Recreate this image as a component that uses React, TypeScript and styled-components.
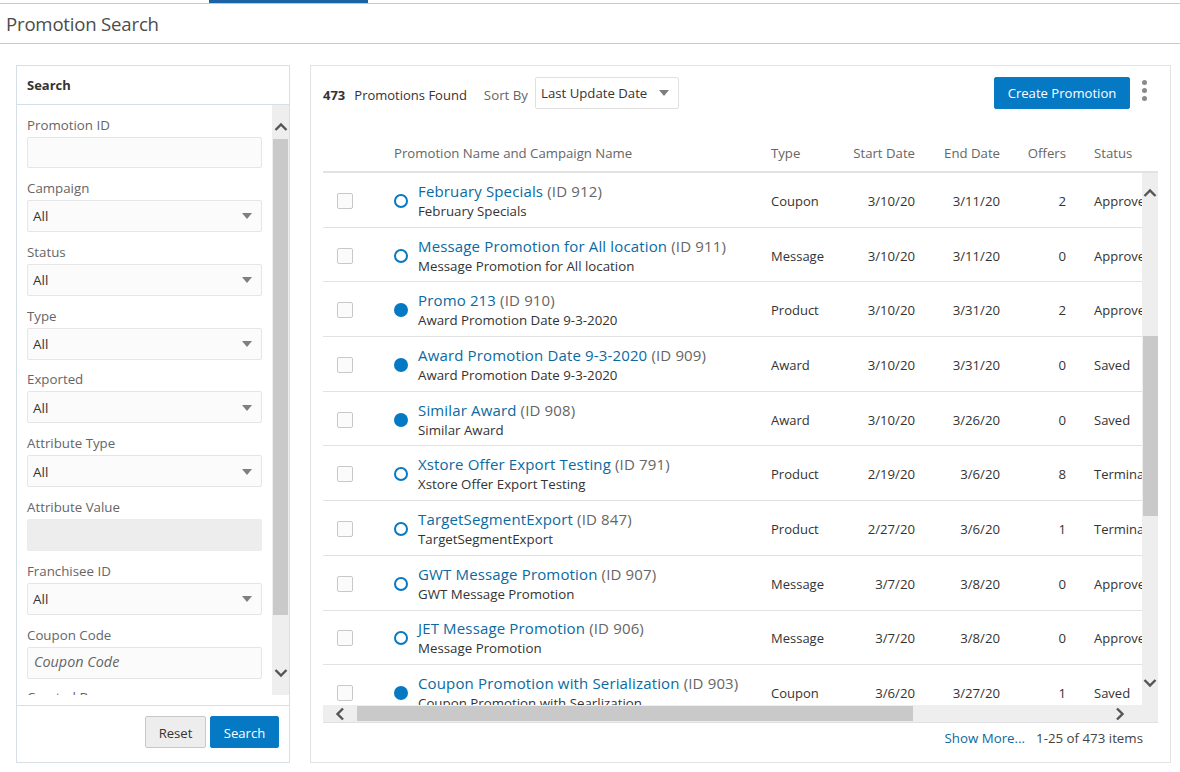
import React from "react";
import styled, { createGlobalStyle } from "styled-components";

const Global = createGlobalStyle`
  html, body { margin: 0; padding: 0; background: #fff; }
  body { font-family: "Open Sans", "Noto Sans", sans-serif; color: #333; font-size: 13px; }
  * { box-sizing: border-box; }
`;

const Page = styled.div`
  width: 1180px;
  height: 772px;
  overflow: hidden;
  display: flex;
  flex-direction: column;
`;
const TopStrip = styled.div`
  height: 4px;
  border-bottom: 1px solid #c8c8c8;
  padding-left: 209px;
`;
const ActiveTab = styled.div`
  width: 159px;
  height: 3px;
  background: #1b63a5;
`;
const TitleBar = styled.header`
  height: 40px;
  border-bottom: 1px solid #c8c8c8;
  padding-left: 6px;
  display: flex;
  align-items: center;
`;
const Title = styled.h1`
  margin: 0;
  font-size: 18.6px;
  font-weight: 400;
  color: #4c4c4c;
  letter-spacing: -0.2px;
`;
const Content = styled.main`
  display: flex;
  gap: 20px;
  padding: 21px 9px 0 16px;
`;
const SearchPanel = styled.aside`
  width: 274px;
  height: 698px;
  border: 1px solid #d6dfe8;
  display: flex;
  flex-direction: column;
`;
const PanelHead = styled.div`
  height: 39px;
  flex: none;
  border-bottom: 1px solid #d6dfe8;
  padding-left: 10px;
  display: flex;
  align-items: center;
  font-weight: 700;
  font-size: 13px;
  color: #333;
`;
const PanelBody = styled.div`
  height: 590px;
  flex: none;
  display: flex;
  overflow: hidden;
`;
const Form = styled.div`
  flex: 1;
  padding: 11px 10px 0;
  overflow: hidden;
`;
const Field = styled.div`
  margin-bottom: 10.85px;
  &:last-child {
    margin-top: -2px;
  }
`;
const Label = styled.div`
  font-size: 13.3px;
  line-height: 18px;
  height: 21px;
  color: #666;
`;
const Control = styled.div<{ $h?: number; $disabled?: boolean }>`
  height: ${(p) => p.$h ?? 32}px;
  border: 1px solid ${(p) => (p.$disabled ? "#ececec" : "#e6e6e6")};
  border-radius: 2px;
  background: ${(p) => (p.$disabled ? "#ededed" : "#fbfbfb")};
  display: flex;
  align-items: center;
  justify-content: space-between;
  padding: 1px 9px 0 5px;
  font-size: 13.5px;
  color: #333;
`;
const Placeholder = styled.span`
  font-style: italic;
  font-size: 14.4px;
  color: #666;
  padding: 0 0 3px 1px;
`;
const Caret = styled.span`
  width: 0;
  height: 0;
  border-left: 5px solid transparent;
  border-right: 5px solid transparent;
  border-top: 6px solid #7f7f7f;
`;
const VBar = styled.div<{ $w: number }>`
  width: ${(p) => p.$w}px;
  flex: none;
  background: #eeeeee;
  display: flex;
  flex-direction: column;
  align-items: center;
`;
const BarButton = styled.div<{ $h: number; $top?: number }>`
  height: ${(p) => p.$h}px;
  padding-top: ${(p) => p.$top ?? 0}px;
  flex: none;
  display: flex;
  align-items: center;
  justify-content: center;
  color: #555;
`;
const Thumb = styled.div<{ $h: number; $top?: number }>`
  width: 15px;
  height: ${(p) => p.$h}px;
  margin-top: ${(p) => p.$top ?? 0}px;
  background: #c9c9c9;
  flex: none;
`;
const Spacer = styled.div`
  flex: 1;
`;
const PanelFoot = styled.div`
  flex: 1;
  border-top: 1px solid #d6dfe8;
  margin-top: 10px;
  padding: 10px 10px 0;
  display: flex;
  justify-content: flex-end;
  align-items: flex-start;
  gap: 4px;
`;
const Button = styled.button<{ $primary?: boolean; $w: number; $drop?: number }>`
  width: ${(p) => p.$w}px;
  height: 32px;
  border: 1px solid ${(p) => (p.$primary ? "#0a7cc7" : "#c8c8c8")};
  border-radius: 2px;
  background: ${(p) => (p.$primary ? "#0679c5" : "#ededed")};
  color: ${(p) => (p.$primary ? "#fff" : "#333")};
  font: 400 13.1px "Open Sans", "Noto Sans", sans-serif;
  padding: ${(p) => p.$drop ?? 0}px 0 0;
`;
const ResultsPanel = styled.section`
  width: 861px;
  height: 698px;
  border: 1px solid #e2e2e2;
  padding: 11px 12px 0;
  display: flex;
  flex-direction: column;
`;
const Toolbar = styled.div`
  height: 32px;
  flex: none;
  display: flex;
  align-items: center;
`;
const Count = styled.b`
  font-size: 13px;
  font-weight: 700;
  margin-right: 9px;
  padding-top: 4px;
  color: #333;
`;
const Found = styled.span`
  font-size: 13px;
  color: #333;
  margin-right: 17px;
  padding-top: 4px;
`;
const SortLabel = styled.span`
  font-size: 13.3px;
  color: #666;
  margin-right: 7px;
  padding-top: 4px;
`;
const SortSelect = styled.div`
  width: 144px;
  height: 32px;
  border: 1px solid #e0e0e0;
  border-radius: 2px;
  display: flex;
  align-items: center;
  justify-content: space-between;
  padding: 0 9px 1px 5px;
  font-size: 13.2px;
  color: #333;
`;
const Dots = styled.div`
  width: 28px;
  padding-bottom: 5px;
  display: flex;
  flex-direction: column;
  align-items: center;
  gap: 3px;
`;
const Dot = styled.span`
  width: 5px;
  height: 5px;
  border-radius: 50%;
  background: #8a8a8a;
`;
const GRID = "71px 377px 82px 62px 85px 66px 1fr";
const HeadRow = styled.div`
  margin-top: 18px;
  height: 46px;
  flex: none;
  border-bottom: 2px solid #e2e2e2;
  display: grid;
  grid-template-columns: ${GRID};
  align-items: end;
  font-size: 13.2px;
  color: #666;
  padding-bottom: 9px;
`;
const HeadCell = styled.div<{ $right?: boolean }>`
  text-align: ${(p) => (p.$right ? "right" : "left")};
  white-space: nowrap;
`;
const Middle = styled.div`
  height: 532px;
  flex: none;
  display: flex;
`;
const RowsClip = styled.div`
  flex: 1;
  overflow: hidden;
`;
const Row = styled.div`
  height: 54.7px;
  padding-top: 2px;
  border-bottom: 1px solid #e2e2e2;
  display: grid;
  grid-template-columns: ${GRID};
  align-items: center;
  font-size: 13px;
  color: #333;
`;
const CheckCell = styled.div`
  display: flex;
  padding-left: 14px;
`;
const Check = styled.span`
  width: 16px;
  height: 16px;
  border: 1px solid #c8c8c8;
  border-radius: 2px;
  background: #fbfbfb;
`;
const NameCell = styled.div`
  display: flex;
  align-items: center;
  gap: 10px;
  min-width: 0;
`;
const Status = styled.span<{ $filled: boolean }>`
  width: 14px;
  height: 14px;
  flex: none;
  border-radius: 50%;
  border: 2px solid #0679c5;
  background: ${(p) => (p.$filled ? "#0679c5" : "#fff")};
`;
const NameText = styled.div`
  white-space: nowrap;
`;
const NameLine = styled.div`
  font-size: 15px;
  letter-spacing: 0.15px;
  color: #666;
  line-height: 20px;
`;
const Link = styled.span`
  color: #0a6aa1;
`;
const Sub = styled.div`
  font-size: 13.3px;
  line-height: 20px;
  color: #333;
`;
const Num = styled.div`
  text-align: right;
  font-size: 13.2px;
`;
const StatusText = styled.div`
  padding-left: 28px;
  white-space: nowrap;
  overflow: hidden;
`;
const HBar = styled.div`
  height: 18px;
  flex: none;
  background: #eeeeee;
  border-bottom: 1px solid #e0e0e0;
  display: flex;
  align-items: center;
`;
const HThumb = styled.div`
  width: 556px;
  height: 15px;
  background: #c9c9c9;
`;
const ArrowSlot = styled.div<{ $w: number }>`
  width: ${(p) => p.$w}px;
  flex: none;
  display: flex;
  align-items: center;
  justify-content: center;
  color: #555;
`;
const Pager = styled.div`
  height: 30px;
  display: flex;
  justify-content: flex-end;
  align-items: center;
  gap: 11px;
  padding-right: 15px;
  font-size: 13.3px;
  color: #444;
`;
const ChevronIcon = ({ d }: { d: string }) => (
  <svg width="14" height="14" viewBox="0 0 14 14" fill="none" stroke="currentColor" strokeWidth="2.4">
    <path d={d} />
  </svg>
);
const UP = "M1.5 10 L7 4.5 L12.5 10";
const DOWN = "M1.5 4 L7 9.5 L12.5 4";
const LEFT = "M10 1.5 L4.5 7 L10 12.5";
const RIGHT = "M4 1.5 L9.5 7 L4 12.5";

const fields = [
  { label: "Promotion ID", kind: "input" },
  { label: "Campaign", kind: "select" },
  { label: "Status", kind: "select" },
  { label: "Type", kind: "select" },
  { label: "Exported", kind: "select" },
  { label: "Attribute Type", kind: "select" },
  { label: "Attribute Value", kind: "disabled" },
  { label: "Franchisee ID", kind: "select" },
  { label: "Coupon Code", kind: "placeholder" },
  { label: "Created By", kind: "input" },
];

const rows = [
  ["February Specials", "912", "February Specials", "Coupon", "3/10/20", "3/11/20", "2", "Approved", false],
  ["Message Promotion for All location", "911", "Message Promotion for All location", "Message", "3/10/20", "3/11/20", "0", "Approved", false],
  ["Promo 213", "910", "Award Promotion Date 9-3-2020", "Product", "3/10/20", "3/31/20", "2", "Approved", true],
  ["Award Promotion Date 9-3-2020", "909", "Award Promotion Date 9-3-2020", "Award", "3/10/20", "3/31/20", "0", "Saved", true],
  ["Similar Award", "908", "Similar Award", "Award", "3/10/20", "3/26/20", "0", "Saved", true],
  ["Xstore Offer Export Testing", "791", "Xstore Offer Export Testing", "Product", "2/19/20", "3/6/20", "8", "Terminated", false],
  ["TargetSegmentExport", "847", "TargetSegmentExport", "Product", "2/27/20", "3/6/20", "1", "Terminated", false],
  ["GWT Message Promotion", "907", "GWT Message Promotion", "Message", "3/7/20", "3/8/20", "0", "Approved", false],
  ["JET Message Promotion", "906", "Message Promotion", "Message", "3/7/20", "3/8/20", "0", "Approved", false],
  ["Coupon Promotion with Serialization", "903", "Coupon Promotion with Searlization", "Coupon", "3/6/20", "3/27/20", "1", "Saved", true],
] as const;

export default function App() {
  return (
    <Page>
      <Global />
      <TopStrip>
        <ActiveTab />
      </TopStrip>
      <TitleBar>
        <Title>Promotion Search</Title>
      </TitleBar>
      <Content>
        <SearchPanel>
          <PanelHead>Search</PanelHead>
          <PanelBody>
            <Form>
              {fields.map((f) => (
                <Field key={f.label}>
                  <Label>{f.label}</Label>
                  {f.kind === "select" && (
                    <Control>
                      <span>All</span>
                      <Caret />
                    </Control>
                  )}
                  {f.kind === "input" && <Control $h={31} />}
                  {f.kind === "disabled" && <Control $disabled />}
                  {f.kind === "placeholder" && (
                    <Control $h={32}>
                      <Placeholder>{f.label}</Placeholder>
                    </Control>
                  )}
                </Field>
              ))}
            </Form>
            <VBar $w={17}>
              <BarButton $h={34} $top={10}>
                <ChevronIcon d={UP} />
              </BarButton>
              <Thumb $h={476} />
              <Spacer />
              <BarButton $h={44}>
                <ChevronIcon d={DOWN} />
              </BarButton>
            </VBar>
          </PanelBody>
          <PanelFoot>
            <Button $w={61} $drop={1}>Reset</Button>
            <Button $primary $w={69} $drop={1}>Search</Button>
          </PanelFoot>
        </SearchPanel>
        <ResultsPanel>
          <Toolbar>
            <Count>473</Count>
            <Found>Promotions Found</Found>
            <SortLabel>Sort By</SortLabel>
            <SortSelect>
              <span>Last Update Date</span>
              <Caret />
            </SortSelect>
            <Spacer />
            <Button $primary $w={136}>Create Promotion</Button>
            <Dots>
              <Dot />
              <Dot />
              <Dot />
            </Dots>
          </Toolbar>
          <HeadRow>
            <HeadCell />
            <HeadCell>Promotion Name and Campaign Name</HeadCell>
            <HeadCell>Type</HeadCell>
            <HeadCell $right>Start Date</HeadCell>
            <HeadCell $right>End Date</HeadCell>
            <HeadCell $right>Offers</HeadCell>
            <HeadCell as={StatusText}>Status</HeadCell>
          </HeadRow>
          <Middle>
            <RowsClip>
              {rows.map((r) => (
                <Row key={r[1]}>
                  <CheckCell>
                    <Check />
                  </CheckCell>
                  <NameCell>
                    <Status $filled={r[8]} />
                    <NameText>
                      <NameLine>
                        <Link>{r[0]}</Link> (ID {r[1]})
                      </NameLine>
                      <Sub>{r[2]}</Sub>
                    </NameText>
                  </NameCell>
                  <div>{r[3]}</div>
                  <Num>{r[4]}</Num>
                  <Num>{r[5]}</Num>
                  <Num>{r[6]}</Num>
                  <StatusText>{r[7]}</StatusText>
                </Row>
              ))}
            </RowsClip>
            <VBar $w={16}>
              <BarButton $h={40}>
                <ChevronIcon d={UP} />
              </BarButton>
              <Thumb $h={180} $top={123} />
              <Spacer />
              <BarButton $h={44}>
                <ChevronIcon d={DOWN} />
              </BarButton>
            </VBar>
          </Middle>
          <HBar>
            <ArrowSlot $w={34}>
              <ChevronIcon d={LEFT} />
            </ArrowSlot>
            <HThumb />
            <Spacer />
            <ArrowSlot $w={76}>
              <ChevronIcon d={RIGHT} />
            </ArrowSlot>
          </HBar>
          <Pager>
            <Link>Show More...</Link>
            <span>1-25 of 473 items</span>
          </Pager>
        </ResultsPanel>
      </Content>
    </Page>
  );
}
